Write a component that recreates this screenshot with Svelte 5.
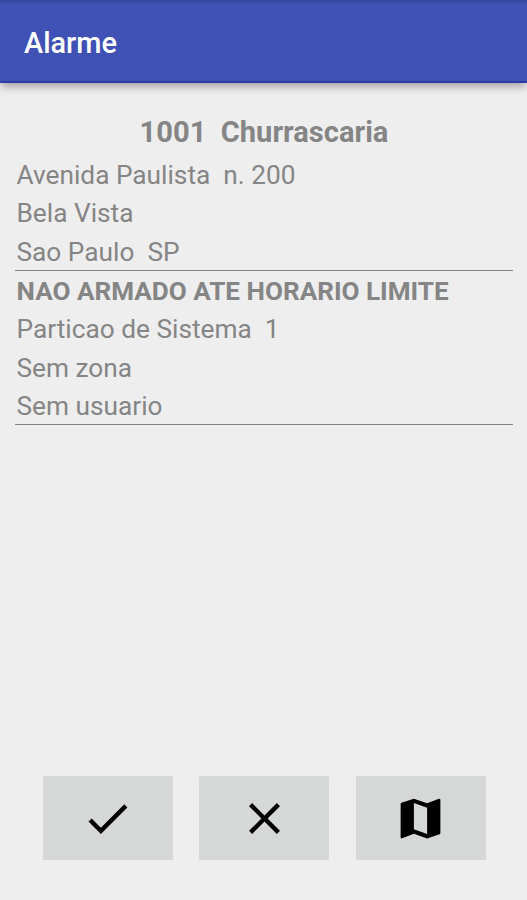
<script lang="ts">
    const address = ["Avenida Paulista  n. 200", "Bela Vista", "Sao Paulo  SP"];
    const details = ["Particao de Sistema  1", "Sem zona", "Sem usuario"];

    const actions = [
        { label: "Confirmar", icon: "M9 16.17L4.83 12l-1.42 1.41L9 19 21 7l-1.41-1.41z" },
        {
            label: "Cancelar",
            icon: "M19 6.41L17.59 5 12 10.59 6.41 5 5 6.41 10.59 12 5 17.59 6.41 19 12 13.41 17.59 19 19 17.59 13.41 12z",
        },
        {
            label: "Mapa",
            icon: "M20.5 3l-.16.03L15 5.1 9 3 3.36 4.9c-.21.07-.36.25-.36.48V20.5c0 .28.22.5.5.5l.16-.03L9 18.9l6 2.1 5.64-1.9c.21-.07.36-.25.36-.48V3.5c0-.28-.22-.5-.5-.5zM15 19l-6-2.11V5l6 2.11V19z",
        },
    ];
</script>

<div class="screen">
    <header>
        <h1>Alarme</h1>
    </header>

    <main>
        <h2>1001  Churrascaria</h2>
        <section>
            {#each address as line}
                <p>{line}</p>
            {/each}
        </section>
        <section>
            <p class="event">NAO ARMADO ATE HORARIO LIMITE</p>
            {#each details as line}
                <p>{line}</p>
            {/each}
        </section>
    </main>

    <footer>
        {#each actions as action}
            <button aria-label={action.label}>
                <svg viewBox="0 0 24 24" aria-hidden="true">
                    <path d={action.icon} />
                </svg>
            </button>
        {/each}
    </footer>
</div>

<style>
    :global(body) {
        margin: 0;
    }

    .screen {
        display: flex;
        flex-direction: column;
        box-sizing: border-box;
        height: 900px;
        padding-bottom: 40px;
        background: #eeeeee;
        font-family: Roboto, sans-serif;
        color: #858585;
    }

    header {
        display: flex;
        align-items: center;
        box-sizing: border-box;
        height: 83px;
        padding: 5px 24px 0;
        border-bottom: 2px solid #2b3da0;
        background: linear-gradient(#36459b, #3f51b5 4px);
        box-shadow: 0 5px 8px -1px rgba(0, 0, 0, 0.3);
    }

    h1 {
        margin: 0;
        font-size: 28.9px;
        font-weight: 500;
        color: #ffffff;
    }

    main {
        flex: 1;
        padding: 30px 14px 0 15px;
    }

    h2,
    p {
        margin: 0;
        font-size: 26.25px;
        line-height: 38.4px;
        white-space: pre;
    }

    h2 {
        padding-bottom: 3px;
        font-size: 29.1px;
        font-weight: 700;
        text-align: center;
    }

    section {
        padding: 1.3px 0 0 1.5px;
        border-bottom: 1px solid #858585;
    }

    /* keeps the last line tight against the rule */
    p:last-child {
        margin-bottom: -1.3px;
    }

    .event {
        font-size: 26.1px;
        font-weight: 700;
    }

    footer {
        display: flex;
        justify-content: center;
        gap: 26.5px;
        padding-left: 1px;
    }

    button {
        display: flex;
        align-items: center;
        justify-content: center;
        width: 130px;
        height: 84px;
        padding: 0;
        border: none;
        border-radius: 1px;
        background: #d6d7d7;
    }

    svg {
        flex: none;
        width: 53px;
        height: 53px;
    }
</style>
